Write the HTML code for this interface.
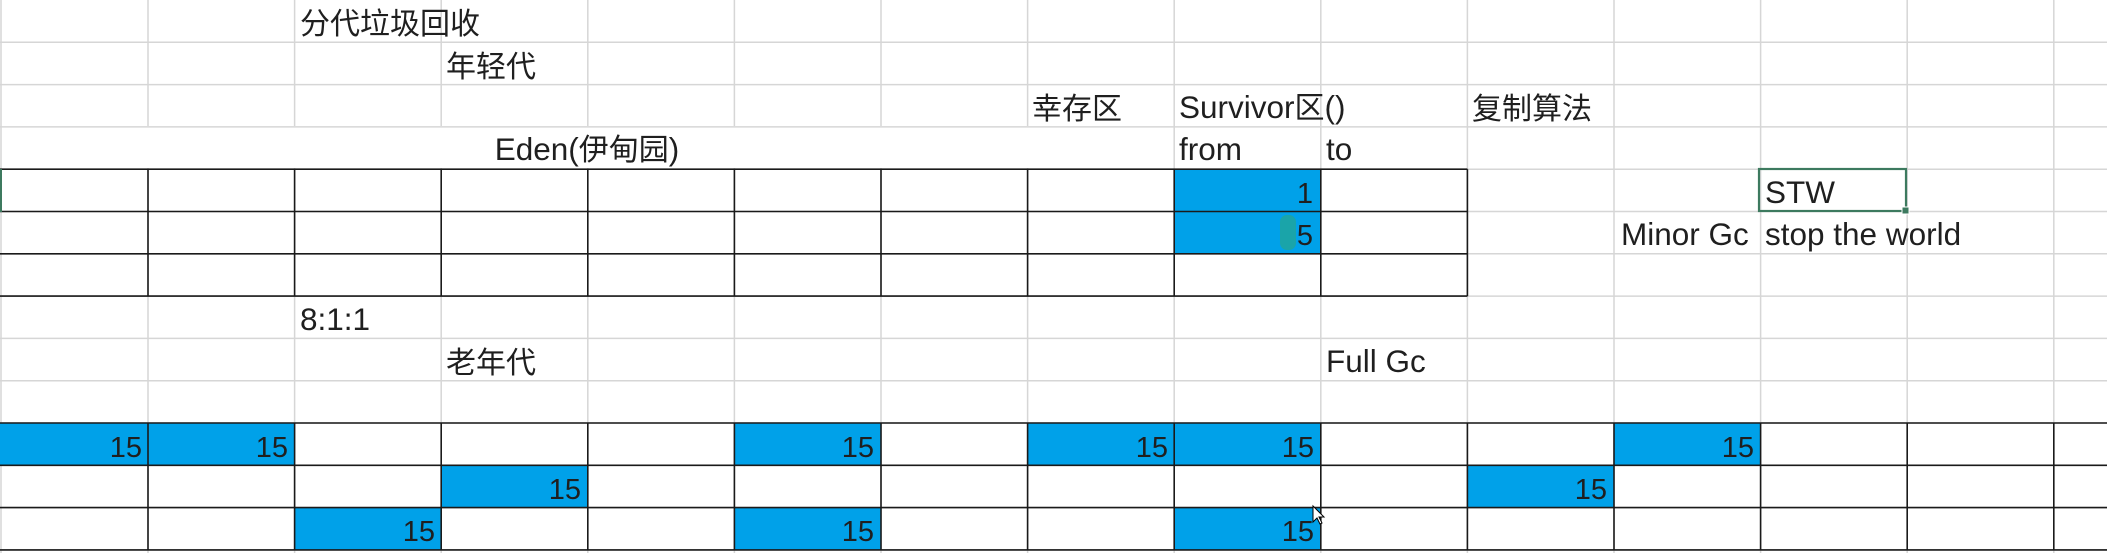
<!DOCTYPE html>
<html><head><meta charset="utf-8"><style>
html,body{margin:0;padding:0;background:#fff;width:2107px;height:553px;overflow:hidden}
svg{display:block}
text{font-family:"Liberation Sans","Noto Sans CJK SC",sans-serif;font-size:31.5px;fill:#1f1f1f}
.c{font-size:30px}
.n{text-anchor:end;font-size:29px}
</style></head><body>
<svg width="2107" height="553" xmlns="http://www.w3.org/2000/svg">
<g stroke="#d6d6d6" stroke-width="1.5">
<line x1="1" y1="0" x2="1" y2="553"/>
<line x1="148" y1="0" x2="148" y2="126"/><line x1="294.6" y1="0" x2="294.6" y2="126"/><line x1="441.2" y1="0" x2="441.2" y2="126"/><line x1="587.8" y1="0" x2="587.8" y2="126"/><line x1="734.4" y1="0" x2="734.4" y2="126"/><line x1="881" y1="0" x2="881" y2="126"/><line x1="1027.6" y1="0" x2="1027.6" y2="126"/><line x1="1174.2" y1="0" x2="1174.2" y2="553"/><line x1="1320.8" y1="0" x2="1320.8" y2="553"/><line x1="1467.4" y1="0" x2="1467.4" y2="553"/><line x1="1614" y1="0" x2="1614" y2="553"/><line x1="1760.6" y1="0" x2="1760.6" y2="553"/><line x1="1907.2" y1="0" x2="1907.2" y2="553"/><line x1="2053.8" y1="0" x2="2053.8" y2="553"/>
<line x1="148" y1="168" x2="148" y2="553"/><line x1="294.6" y1="168" x2="294.6" y2="553"/><line x1="441.2" y1="168" x2="441.2" y2="553"/><line x1="587.8" y1="168" x2="587.8" y2="553"/><line x1="734.4" y1="168" x2="734.4" y2="553"/><line x1="881" y1="168" x2="881" y2="553"/><line x1="1027.6" y1="168" x2="1027.6" y2="553"/>
<line x1="0" y1="42.3" x2="2107" y2="42.3"/><line x1="0" y1="84.6" x2="2107" y2="84.6"/><line x1="0" y1="126.9" x2="2107" y2="126.9"/><line x1="0" y1="169.2" x2="2107" y2="169.2"/><line x1="0" y1="211.5" x2="2107" y2="211.5"/><line x1="0" y1="253.8" x2="2107" y2="253.8"/><line x1="0" y1="296.1" x2="2107" y2="296.1"/><line x1="0" y1="338.4" x2="2107" y2="338.4"/><line x1="0" y1="380.7" x2="2107" y2="380.7"/><line x1="0" y1="423" x2="2107" y2="423"/><line x1="0" y1="465.3" x2="2107" y2="465.3"/><line x1="0" y1="507.6" x2="2107" y2="507.6"/><line x1="0" y1="549.9" x2="2107" y2="549.9"/>
</g>
<g fill="#00a1e9">
<rect x="1174.2" y="169.2" width="146.6" height="84.6"/>
<rect x="0" y="423" width="148" height="42.3"/><rect x="148" y="423" width="146.6" height="42.3"/><rect x="734.4" y="423" width="146.6" height="42.3"/><rect x="1027.6" y="423" width="146.6" height="42.3"/><rect x="1174.2" y="423" width="146.6" height="42.3"/><rect x="1614" y="423" width="146.6" height="42.3"/>
<rect x="441.2" y="465.3" width="146.6" height="42.3"/><rect x="1467.4" y="465.3" width="146.6" height="42.3"/>
<rect x="294.6" y="507.6" width="146.6" height="42.3"/><rect x="734.4" y="507.6" width="146.6" height="42.3"/><rect x="1174.2" y="507.6" width="146.6" height="42.3"/>
</g>
<rect x="1280" y="215" width="16" height="35" rx="7" fill="#1aa4a9"/>
<g stroke="#1a1a1a" stroke-width="1.6">
<line x1="0" y1="169.2" x2="1467.4" y2="169.2"/><line x1="0" y1="211.5" x2="1467.4" y2="211.5"/><line x1="0" y1="253.8" x2="1467.4" y2="253.8"/><line x1="0" y1="296.1" x2="1467.4" y2="296.1"/>
<line x1="148" y1="169.2" x2="148" y2="296.1"/><line x1="294.6" y1="169.2" x2="294.6" y2="296.1"/><line x1="441.2" y1="169.2" x2="441.2" y2="296.1"/><line x1="587.8" y1="169.2" x2="587.8" y2="296.1"/><line x1="734.4" y1="169.2" x2="734.4" y2="296.1"/><line x1="881" y1="169.2" x2="881" y2="296.1"/><line x1="1027.6" y1="169.2" x2="1027.6" y2="296.1"/><line x1="1174.2" y1="169.2" x2="1174.2" y2="296.1"/><line x1="1320.8" y1="169.2" x2="1320.8" y2="296.1"/><line x1="1467.4" y1="169.2" x2="1467.4" y2="296.1"/>
<line x1="0" y1="423" x2="2107" y2="423"/><line x1="0" y1="465.3" x2="2107" y2="465.3"/><line x1="0" y1="507.6" x2="2107" y2="507.6"/><line x1="0" y1="549.9" x2="2107" y2="549.9"/>
<line x1="148" y1="423" x2="148" y2="550"/><line x1="294.6" y1="423" x2="294.6" y2="550"/><line x1="441.2" y1="423" x2="441.2" y2="550"/><line x1="587.8" y1="423" x2="587.8" y2="550"/><line x1="734.4" y1="423" x2="734.4" y2="550"/><line x1="881" y1="423" x2="881" y2="550"/><line x1="1027.6" y1="423" x2="1027.6" y2="550"/><line x1="1174.2" y1="423" x2="1174.2" y2="550"/><line x1="1320.8" y1="423" x2="1320.8" y2="550"/><line x1="1467.4" y1="423" x2="1467.4" y2="550"/><line x1="1614" y1="423" x2="1614" y2="550"/><line x1="1760.6" y1="423" x2="1760.6" y2="550"/><line x1="1907.2" y1="423" x2="1907.2" y2="550"/><line x1="2053.8" y1="423" x2="2053.8" y2="550"/>
</g>
<line x1="1" y1="169" x2="1" y2="212" stroke="#3d7a5f" stroke-width="2"/>
<rect x="1759" y="169" width="147" height="42" fill="none" stroke="#3d7a5f" stroke-width="2.2"/>
<rect x="1902" y="207" width="7" height="7" fill="#3d7a5f" stroke="#fff" stroke-width="1"/>
<text class="c" x="300" y="34">分代垃圾回收</text>
<text class="c" x="446" y="77">年轻代</text>
<text class="c" x="1032" y="119">幸存区</text>
<text x="1179" y="118">Survivor<tspan class="c">区</tspan>()</text>
<text class="c" x="1472" y="119">复制算法</text>
<text x="587" y="160" text-anchor="middle">Eden(<tspan class="c">伊甸园</tspan>)</text>
<text x="1179" y="160">from</text>
<text x="1326" y="160">to</text>
<text class="n" x="1313" y="203">1</text>
<text x="1765" y="203">STW</text>
<text class="n" x="1313" y="245">5</text>
<text x="1621" y="245">Minor Gc</text>
<text x="1765" y="245">stop the world</text>
<text x="300" y="330">8:1:1</text>
<text class="c" x="446" y="373">老年代</text>
<text x="1326" y="372">Full Gc</text>
<text class="n" x="142" y="457">15</text><text class="n" x="288" y="457">15</text><text class="n" x="874" y="457">15</text><text class="n" x="1168" y="457">15</text><text class="n" x="1314" y="457">15</text><text class="n" x="1754" y="457">15</text>
<text class="n" x="581" y="499">15</text><text class="n" x="1607" y="499">15</text>
<text class="n" x="435" y="541">15</text><text class="n" x="874" y="541">15</text><text class="n" x="1314" y="541">15</text>
<path d="M1313 506 L1313 522 L1317 518 L1320 524 L1322 523 L1319 517 L1324 517 Z" fill="#fff" stroke="#000" stroke-width="1"/>
</svg>
</body></html>
